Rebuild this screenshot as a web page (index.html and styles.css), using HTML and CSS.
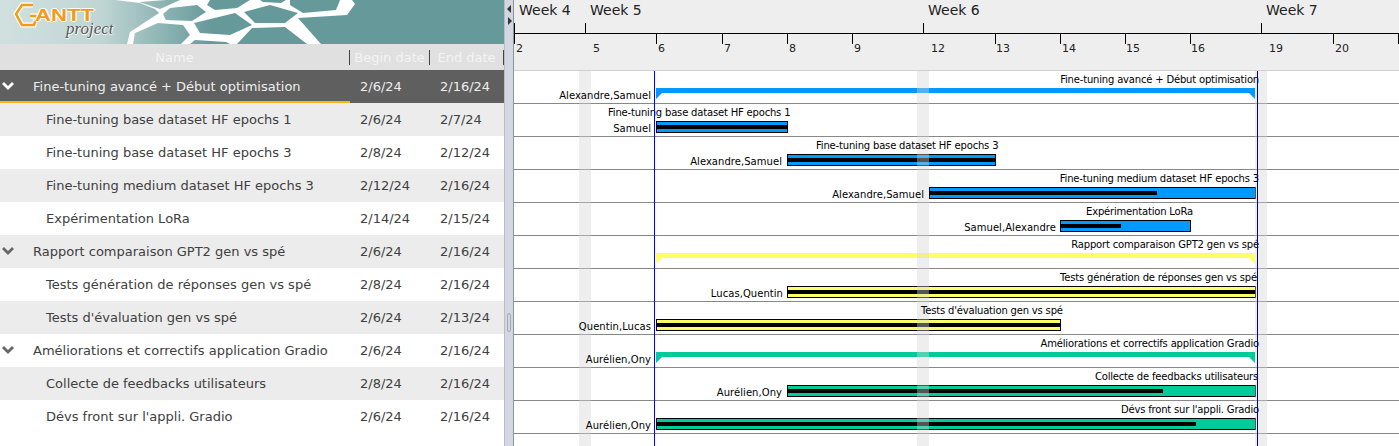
FILE: index.html
```html
<!DOCTYPE html>
<html lang="en">
<head>
  <meta charset="UTF-8">
  <title>GanttProject</title>
  <link rel="stylesheet" href="styles.css">
</head>
<body>
  <div class="app">
    <div class="left">
      <div class="banner">
        <svg class="banner-art" width="504" height="44" viewBox="0 0 504 44">
          <defs>
            <linearGradient id="fade" gradientUnits="userSpaceOnUse" x1="0" x2="504" y1="0" y2="0">
              <stop offset="0" stop-color="#d0e0df"/>
              <stop offset="0.2" stop-color="#c0d6d4"/>
              <stop offset="0.42" stop-color="#66999a"/>
              <stop offset="1" stop-color="#66999a"/>
            </linearGradient>
          </defs>
          <rect width="504" height="44" fill="url(#fade)"/>
          <polygon fill="#fff" points="115,0 352,0 355,4 347,15 298,18 321,44 127,44 130,32 159,13 155,9 140,3"/>
          <g fill="url(#fade)">
            <polygon points="139,2 166,0 180,0 160,9"/>
            <polygon points="163,14 170,8 197,5 206,12 192,21 166,20"/>
            <polygon points="210,0 250,0 237,8 215,10 207,5"/>
            <polygon points="135,33 158,23 183,25 190,35 181,44 133,44"/>
            <polygon points="194,23 235,13 252,25 230,35 200,33"/>
            <polygon points="195,40 226,42 230,44 190,44"/>
            <polygon points="244,12 270,5 298,13 285,23 255,23"/>
            <polygon points="237,44 252,28 285,27 307,44"/>
            <polygon points="260,0 286,0 281,3 263,2"/>
            <polygon points="290,0 340,0 336,10 303,13 290,5"/>
          </g>
        </svg>
        <svg class="logo-mark" width="32" height="26" viewBox="0 0 32 26">
          <path d="M20 3 H9 L3 12 L9 23 H21 L24 14 H17" fill="none" stroke="#fff" stroke-width="5"/>
          <path d="M20 3 H9 L3 12 L9 23 H21 L24 14 H17" fill="none" stroke="#f59a16" stroke-width="2.6"/>
        </svg>
        <span class="logo-word">ANTT</span>
        <span class="logo-sub">project</span>
      </div>

      <div class="table-head">
        <div class="col-name">Name</div>
        <div class="col-begin">Begin date</div>
        <div class="col-end">End date</div>
      </div>

      <div class="row selected group">
        <svg class="chevron" width="14" height="10" viewBox="0 0 14 10"><path d="M2 2 L7 7 L12 2" fill="none" stroke="currentColor" stroke-width="2.8"/></svg>
        <span class="cell-name">Fine-tuning avancé + Début optimisation</span>
        <span class="cell-begin">2/6/24</span><span class="cell-end">2/16/24</span>
      </div>
      <div class="row alt">
        <span class="cell-name">Fine-tuning base dataset HF epochs 1</span>
        <span class="cell-begin">2/6/24</span><span class="cell-end">2/7/24</span>
      </div>
      <div class="row">
        <span class="cell-name">Fine-tuning base dataset HF epochs 3</span>
        <span class="cell-begin">2/8/24</span><span class="cell-end">2/12/24</span>
      </div>
      <div class="row alt">
        <span class="cell-name">Fine-tuning medium dataset HF epochs 3</span>
        <span class="cell-begin">2/12/24</span><span class="cell-end">2/16/24</span>
      </div>
      <div class="row">
        <span class="cell-name">Expérimentation LoRa</span>
        <span class="cell-begin">2/14/24</span><span class="cell-end">2/15/24</span>
      </div>
      <div class="row alt group">
        <svg class="chevron" width="14" height="10" viewBox="0 0 14 10"><path d="M2 2 L7 7 L12 2" fill="none" stroke="currentColor" stroke-width="2.8"/></svg>
        <span class="cell-name">Rapport comparaison GPT2 gen vs spé</span>
        <span class="cell-begin">2/6/24</span><span class="cell-end">2/16/24</span>
      </div>
      <div class="row">
        <span class="cell-name">Tests génération de réponses gen vs spé</span>
        <span class="cell-begin">2/8/24</span><span class="cell-end">2/16/24</span>
      </div>
      <div class="row alt">
        <span class="cell-name">Tests d'évaluation gen vs spé</span>
        <span class="cell-begin">2/6/24</span><span class="cell-end">2/13/24</span>
      </div>
      <div class="row group">
        <svg class="chevron" width="14" height="10" viewBox="0 0 14 10"><path d="M2 2 L7 7 L12 2" fill="none" stroke="currentColor" stroke-width="2.8"/></svg>
        <span class="cell-name">Améliorations et correctifs application Gradio</span>
        <span class="cell-begin">2/6/24</span><span class="cell-end">2/16/24</span>
      </div>
      <div class="row alt">
        <span class="cell-name">Collecte de feedbacks utilisateurs</span>
        <span class="cell-begin">2/8/24</span><span class="cell-end">2/16/24</span>
      </div>
      <div class="row">
        <span class="cell-name">Dévs front sur l'appli. Gradio</span>
        <span class="cell-begin">2/6/24</span><span class="cell-end">2/16/24</span>
      </div>
    </div>

    <div class="divider">
      <span class="arrow-left"></span>
      <span class="arrow-right"></span>
      <span class="grip"></span>
    </div>

    <div class="chart">
      <div class="time-head">
        <span class="week" style="left:5px">Week 4</span>
        <span class="week" style="left:76px">Week 5</span>
        <span class="week" style="left:414px">Week 6</span>
        <span class="week" style="left:752px">Week 7</span>
        <span class="week-line"></span>
        <span class="tick-week" style="left:0"></span>
        <span class="tick-week" style="left:71px"></span>
        <span class="tick-week" style="left:409px"></span>
        <span class="tick-week" style="left:747px"></span>
        <span class="tick-day" style="left:0"></span><span class="day" style="left:2px">2</span>
        <span class="day" style="left:79px">5</span>
        <span class="tick-day" style="left:142px"></span><span class="day" style="left:144px">6</span>
        <span class="tick-day" style="left:208px"></span><span class="day" style="left:210px">7</span>
        <span class="tick-day" style="left:273px"></span><span class="day" style="left:275px">8</span>
        <span class="tick-day" style="left:338px"></span><span class="day" style="left:340px">9</span>
        <span class="day" style="left:417px">12</span>
        <span class="tick-day" style="left:481px"></span><span class="day" style="left:482px">13</span>
        <span class="tick-day" style="left:546px"></span><span class="day" style="left:548px">14</span>
        <span class="tick-day" style="left:611px"></span><span class="day" style="left:612px">15</span>
        <span class="tick-day" style="left:676px"></span><span class="day" style="left:677px">16</span>
        <span class="day" style="left:755px">19</span>
        <span class="tick-day" style="left:819px"></span><span class="day" style="left:821px">20</span>
        <span class="tick-day" style="left:884px"></span>
      </div>

      <div class="canvas">
        <div class="grid-row"></div><div class="grid-row"></div><div class="grid-row"></div>
        <div class="grid-row"></div><div class="grid-row"></div><div class="grid-row"></div>
        <div class="grid-row"></div><div class="grid-row"></div><div class="grid-row"></div>
        <div class="grid-row"></div><div class="grid-row"></div>

        <!-- bars: left/top/width come from the task dates -->
        <span class="summary blue" style="left:142px;top:17px;width:599px"></span>
        <span class="summary yellow" style="left:142px;top:182px;width:599px"></span>
        <span class="summary green" style="left:142px;top:281px;width:599px"></span>

        <span class="bar blue" style="left:142px;top:50px;width:132px"><i style="width:100%"></i></span>
        <span class="bar blue" style="left:273px;top:83px;width:209px"><i style="width:100%"></i></span>
        <span class="bar blue" style="left:415px;top:116px;width:327px"><i style="width:69.7%"></i></span>
        <span class="bar blue" style="left:546px;top:149px;width:131px"><i style="width:46.5%"></i></span>
        <span class="bar yellow" style="left:273px;top:215px;width:469px"><i style="width:100%"></i></span>
        <span class="bar yellow" style="left:142px;top:248px;width:405px"><i style="width:100%"></i></span>
        <span class="bar green" style="left:273px;top:314px;width:469px"><i style="width:80.3%"></i></span>
        <span class="bar green" style="left:142px;top:347px;width:600px"><i style="width:90.2%"></i></span>

        <span class="weekend" style="left:65px"></span>
        <span class="weekend" style="left:403px"></span>
        <span class="weekend" style="left:741px"></span>

        <span class="label" style="right:140px;top:2px">Fine-tuning avancé + Début optimisation</span>
        <span class="label who" style="right:748px;top:18px">Alexandre,Samuel</span>
        <span class="label" style="left:94px;top:35px">Fine-tuning base dataset HF epochs 1</span>
        <span class="label who" style="right:748px;top:51px">Samuel</span>
        <span class="label" style="left:302px;top:68px">Fine-tuning base dataset HF epochs 3</span>
        <span class="label who" style="right:617px;top:84px">Alexandre,Samuel</span>
        <span class="label" style="right:140px;top:101px">Fine-tuning medium dataset HF epochs 3</span>
        <span class="label who" style="right:475px;top:117px">Alexandre,Samuel</span>
        <span class="label" style="left:572px;top:134px">Expérimentation LoRa</span>
        <span class="label who" style="right:343px;top:150px">Samuel,Alexandre</span>
        <span class="label" style="right:140px;top:167px">Rapport comparaison GPT2 gen vs spé</span>
        <span class="label" style="right:142px;top:200px">Tests génération de réponses gen vs spé</span>
        <span class="label who" style="right:616px;top:216px">Lucas,Quentin</span>
        <span class="label" style="left:407px;top:233px">Tests d'évaluation gen vs spé</span>
        <span class="label who" style="right:748px;top:249px">Quentin,Lucas</span>
        <span class="label" style="right:140px;top:266px">Améliorations et correctifs application Gradio</span>
        <span class="label who" style="right:748px;top:282px">Aurélien,Ony</span>
        <span class="label" style="right:141px;top:299px">Collecte de feedbacks utilisateurs</span>
        <span class="label who" style="right:617px;top:315px">Aurélien,Ony</span>
        <span class="label" style="right:140px;top:332px">Dévs front sur l'appli. Gradio</span>
        <span class="label who" style="right:748px;top:348px">Aurélien,Ony</span>

        <span class="today" style="left:140px"></span>
        <span class="today dark" style="left:743px"></span>
      </div>
    </div>
  </div>
</body>
</html>
```

FILE: styles.css
```css
html, body {
  margin: 0;
  height: 100%;
  overflow: hidden;
  background: #fff;
}
body {
  font-family: "DejaVu Sans", sans-serif;
}
.app {
  display: flex;
  height: 446px;
}

/* left side */
.left {
  width: 504px;
  flex: none;
  background: #fff;
}
.banner {
  position: relative;
  height: 44px;
  overflow: hidden;
}
.banner-art {
  display: block;
}
.logo-mark {
  position: absolute;
  left: 13px;
  top: 2px;
}
.logo-word {
  position: absolute;
  left: 35px;
  top: 10px;
  font-family: "Liberation Sans", sans-serif;
  font-size: 16px;
  line-height: 12px;
  font-weight: bold;
  color: #f59a16;
  transform: scaleX(1.38);
  transform-origin: left;
  text-shadow: 1px 0 #fff, -1px 0 #fff, 0 1px #fff, 0 -1px #fff;
}
.logo-sub {
  position: absolute;
  left: 66px;
  top: 22px;
  font-family: "Liberation Serif", serif;
  font-style: italic;
  font-size: 17px;
  line-height: 14px;
  color: #555;
  text-shadow: 1px 0 #fff, 0 1px #fff;
}
.table-head {
  display: flex;
  height: 26px;
  align-items: center;
  background: #e0e0e0;
  color: #f4f4f4;
  font-size: 13px;
}
.col-name {
  width: 349px;
  text-align: center;
}
.col-begin {
  width: 79px;
  border-left: 1px solid #444;
  height: 15px;
  line-height: 15px;
  text-align: center;
  white-space: nowrap;
}
.col-end {
  width: 73px;
  border-left: 1px solid #444;
  border-right: 1px solid #444;
  height: 15px;
  line-height: 15px;
  text-align: center;
  white-space: nowrap;
}
.row {
  position: relative;
  display: flex;
  height: 33px;
  align-items: center;
  box-sizing: border-box;
  font-size: 13px;
  color: #404040;
  white-space: nowrap;
}
.row.alt {
  background: #ececec;
}
.row.selected {
  background: #5f5f5f;
  color: #eee;
}
.row.selected::after {
  content: "";
  position: absolute;
  left: 0;
  bottom: 0;
  width: 350px;
  height: 2px;
  background: #f6b619;
}
.chevron {
  position: absolute;
  left: 1px;
  top: 11px;
  color: #666;
}
.selected .chevron {
  color: #fff;
}
.cell-name {
  width: 314px;
  margin-left: 46px;
}
.group .cell-name {
  width: 327px;
  margin-left: 33px;
}
.cell-begin {
  width: 80px;
}
.cell-end {
  width: 64px;
}

/* splitter */
.divider {
  position: relative;
  width: 10px;
  flex: none;
  box-sizing: border-box;
  background: #d3d7e1;
  border-left: 1px solid #b8bcc6;
  border-right: 1px solid #8f939c;
}
.arrow-left {
  position: absolute;
  left: 2px;
  top: 5px;
  border: 4px solid transparent;
  border-left-width: 0;
  border-right: 4px solid #333;
}
.arrow-right {
  position: absolute;
  left: 3px;
  top: 17px;
  border: 4px solid transparent;
  border-right-width: 0;
  border-left: 4px solid #333;
}
.grip {
  position: absolute;
  left: 2px;
  top: 313px;
  width: 2px;
  height: 17px;
  border: 1px solid #a4a8b0;
  border-radius: 2px;
}

/* chart */
.chart {
  flex: 1;
  min-width: 0;
}
.time-head {
  position: relative;
  height: 71px;
  box-sizing: border-box;
  background: #eee;
  border-bottom: 1px solid #d0d0d0;
  overflow: hidden;
}
.week {
  position: absolute;
  top: 2px;
  font-size: 14px;
  color: #222;
}
.week-line {
  position: absolute;
  left: 0;
  right: 0;
  top: 33px;
  height: 1px;
  background: #000;
}
.tick-week {
  position: absolute;
  top: 23px;
  width: 1px;
  height: 10px;
  background: #000;
}
.tick-day {
  position: absolute;
  top: 33px;
  width: 1px;
  height: 11px;
  background: #000;
}
.day {
  position: absolute;
  top: 42px;
  font-size: 11px;
  color: #222;
}
.canvas {
  position: relative;
  height: 375px;
  overflow: hidden;
  font-size: 10px;
}
.grid-row {
  height: 33px;
  box-sizing: border-box;
  border-bottom: 1px solid #888;
}
.weekend {
  position: absolute;
  top: 0;
  bottom: 0;
  width: 12px;
  background: rgba(212, 212, 212, 0.4);
}
.today {
  position: absolute;
  top: 0;
  bottom: 0;
  width: 1px;
  background: #0000ff;
}
.today.dark {
  background: #0000b0;
}
.label {
  position: absolute;
  color: #000;
  white-space: nowrap;
  line-height: 13px;
  letter-spacing: -0.18px;
}
.label.who {
  letter-spacing: 0.05px;
}
.bar {
  position: absolute;
  height: 12px;
  box-sizing: border-box;
  border: 1px solid #000;
}
.bar i {
  display: block;
  height: 4px;
  margin-top: 3px;
  background: #000;
}
.bar.blue {
  background: #0099ff;
}
.bar.yellow {
  background: #ffff66;
}
.bar.green {
  background: #00cc99;
}
.summary {
  position: absolute;
  height: 5px;
}
.summary::before, .summary::after {
  content: "";
  position: absolute;
  top: 5px;
  border-top: 6px solid;
}
.summary::before {
  left: 0;
  border-right: 6px solid transparent;
}
.summary::after {
  right: 0;
  border-left: 6px solid transparent;
}
.summary.blue {
  background: #0099ff;
  color: #0099ff;
}
.summary.yellow {
  background: #ffff66;
  color: #ffff66;
}
.summary.green {
  background: #00cc99;
  color: #00cc99;
}
```
